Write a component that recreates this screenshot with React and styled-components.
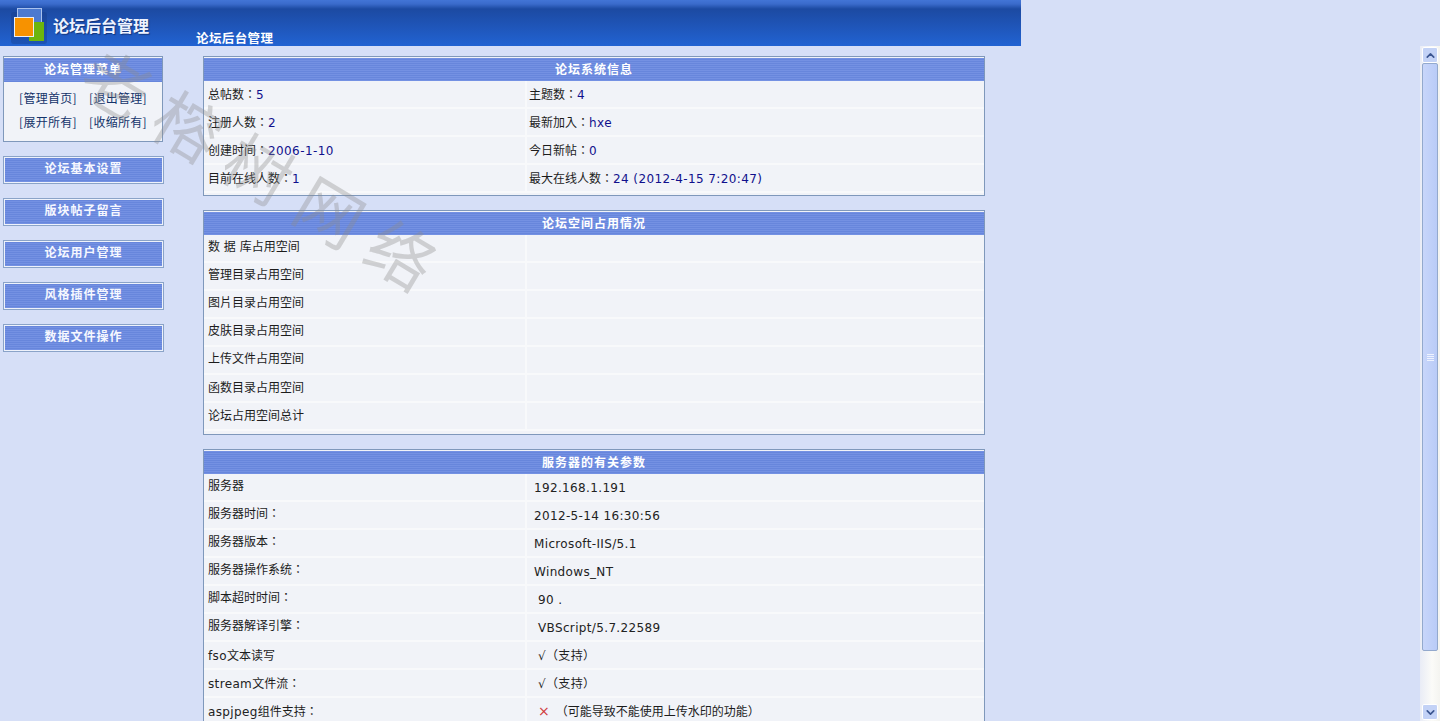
import React from 'react';
import styled, { createGlobalStyle } from 'styled-components';
import { ChevronUp, ChevronDown } from 'lucide-react';

const GlobalStyle = createGlobalStyle`
  html, body {
    margin: 0;
    padding: 0;
    height: 721px;
    overflow: hidden;
    background: #d6dff7;
  }
  * { box-sizing: border-box; }
`;

const Page = styled.div`
  position: relative;
  width: 1440px;
  height: 721px;
  overflow: hidden;
  font-family: "DejaVu Sans", "Noto Sans CJK TC", sans-serif;
  font-size: 12px;
  color: #1c1c1c;
`;

const Header = styled.header`
  width: 1021px;
  height: 46px;
  display: flex;
  align-items: flex-start;
  padding-left: 10px;
  background: linear-gradient(#4275d6 0, #3a6bcb 4px, #1c4aa2 9px, #1f55b8 26px, #2163d2 46px);
`;

const Logo = styled.svg`
  width: 38px;
  height: 38px;
  margin-top: 7px;
  flex: none;
`;

const LogoText = styled.div`
  margin: 14px 0 0 5px;
  width: 143px;
  font-family: "Noto Sans CJK SC", sans-serif;
  font-size: 16px;
  line-height: 22px;
  font-weight: 700;
  color: #eef3ff;
  text-shadow: 1px 1px 1px rgba(10, 30, 80, 0.6);
  white-space: nowrap;
`;

const HeaderTitle = styled.div`
  margin-top: 29px;
  font-family: "Noto Sans CJK SC", sans-serif;
  font-size: 12.5px;
  line-height: 17px;
  font-weight: 700;
  letter-spacing: 0.4px;
  color: #fff;
  white-space: nowrap;
`;

const Body = styled.div`
  display: flex;
  height: 675px;
`;

const Sidebar = styled.aside`
  width: 203px;
  flex: none;
  padding: 10px 0 0 3px;
  display: flex;
  flex-direction: column;
  align-items: flex-start;
`;

const stripes = `repeating-linear-gradient(#7491e3 0, #7491e3 1px, #6786dc 1px, #6786dc 2px)`;

const MenuBox = styled.div`
  width: 160px;
  height: 86px;
  margin-bottom: 14px;
  border: 1px solid #7f98bb;
  padding-top: 1px;
  background: #f1f3f8;
`;

const BoxTitle = styled.div`
  height: 24px;
  padding-bottom: 3px;
  display: flex;
  align-items: center;
  justify-content: center;
  background: ${stripes};
  font-family: "Noto Sans CJK SC", sans-serif;
  font-weight: 700;
  font-size: 12px;
  letter-spacing: 1px;
  color: #fff;
`;

const LinkGrid = styled.div`
  display: grid;
  grid-template-columns: 70px 70px;
  justify-content: center;
  padding-top: 7px;
  row-gap: 6px;
`;

const MenuLink = styled.span`
  font-family: "Noto Sans CJK SC", sans-serif;
  line-height: 18px;
  letter-spacing: 0.3px;
  color: #14336a;
  white-space: nowrap;
  text-align: center;
`;

const MenuButton = styled.div`
  width: 161px;
  height: 28px;
  margin-bottom: 14px;
  border: 1px solid #8aa3c8;
  outline: 1px solid #eef2fb;
  outline-offset: -2px;
  padding-bottom: 5px;
  display: flex;
  align-items: center;
  justify-content: center;
  background: ${stripes};
  font-family: "Noto Sans CJK SC", sans-serif;
  font-weight: 700;
  font-size: 12px;
  letter-spacing: 1px;
  color: #f6f8ff;
`;

const Main = styled.main`
  width: 782px;
  flex: none;
  padding-top: 10px;
  display: flex;
  flex-direction: column;
  gap: 14px;
`;

const Panel = styled.section`
  flex: none;
  border: 1px solid #7f98bb;
  padding: 1px 0 ${(p) => p.$bottom}px;
  background: #f1f3f8;
`;

const PanelTitle = styled(BoxTitle)`
  height: 23px;
`;

const Row = styled.div`
  height: 28px;
  display: grid;
  grid-template-columns: 321px 1fr;
  border-bottom: 2px solid #f8f9fb;
`;

const Cell = styled.div`
  padding: ${(p) => p.$top}px 0 0 ${(p) => p.$left}px;
  line-height: 18px;
  white-space: nowrap;
  border-left: ${(p) => (p.$divided ? '2px solid #f8f9fb' : 'none')};
`;

const Value = styled.span`
  color: #10108c;
  letter-spacing: 0.4px;
`;

const Plain = styled.span`
  color: #222;
  letter-spacing: 0.35px;
`;

const Cross = styled.span`
  color: #d03a3a;
  font-size: 14px;
  line-height: 14px;
  margin-right: 6px;
`;

const Watermark = styled.div`
  position: absolute;
  left: 108px;
  top: 34px;
  transform-origin: 0 0;
  transform: rotate(31deg);
  font-family: "Noto Sans CJK SC", sans-serif;
  font-size: 66px;
  line-height: 70px;
  font-weight: 400;
  letter-spacing: 17px;
  color: rgba(140, 140, 140, 0.36);
  white-space: nowrap;
  pointer-events: none;
`;

const Scrollbar = styled.div`
  position: absolute;
  right: 0;
  top: 46px;
  bottom: 0;
  width: 20px;
  padding: 1px 2px 1px 2px;
  display: flex;
  flex-direction: column;
  background: linear-gradient(90deg, #e9ecf6, #fbfbf8 60%, #f4f4f0);
`;

const ScrollButton = styled.div`
  height: 16px;
  flex: none;
  display: flex;
  align-items: center;
  justify-content: center;
  border: 1px solid #fff;
  border-radius: 2px;
  background: #c3d2f6;
  color: #3b5590;
`;

const Thumb = styled.div`
  flex: none;
  height: 588px;
  display: flex;
  flex-direction: column;
  align-items: center;
  justify-content: center;
  gap: 1px;
  border: 1px solid #93a9cd;
  border-radius: 2px;
  background: linear-gradient(90deg, #c8d6fa, #b9cbf7);
`;

const Grip = styled.span`
  width: 7px;
  height: 1px;
  background: #eef3ff;
`;

const Track = styled.div`
  flex: 1;
`;

const systemRows = [
  ['总帖数：', '5', '主题数：', '4'],
  ['注册人数：', '2', '最新加入：', 'hxe'],
  ['创建时间：', '2006-1-10', '今日新帖：', '0'],
  ['目前在线人数：', '1', '最大在线人数：', '24 (2012-4-15 7:20:47)'],
];

const spaceRows = [
  ['数 据 库占用空间', 3],
  ['管理目录占用空间', 3],
  ['图片目录占用空间', 3],
  ['皮肤目录占用空间', 3],
  ['上传文件占用空间', 3],
  ['函数目录占用空间', 4],
  ['论坛占用空间总计', 4],
];

const serverRows = [
  ['', '服务器', '192.168.1.191', 7, 5, 3],
  ['', '服务器时间：', '2012-5-14 16:30:56', 7, 5, 3],
  ['', '服务器版本：', 'Microsoft-IIS/5.1', 7, 5, 3],
  ['', '服务器操作系统：', 'Windows_NT', 7, 5, 3],
  ['', '脚本超时时间：', '90 .', 11, 5, 3],
  ['', '服务器解译引擎：', 'VBScript/5.7.22589', 11, 5, 3],
  ['fso', '文本读写', '√（支持）', 11, 5, 5],
  ['stream', '文件流：', '√（支持）', 11, 5, 5],
];

const menuButtons = ['论坛基本设置', '版块帖子留言', '论坛用户管理', '风格插件管理', '数据文件操作'];

export default function App() {
  return (
    <Page>
      <GlobalStyle />
      <Header>
        <Logo viewBox="0 0 38 38">
          <rect x="1" y="5" width="36" height="32" rx="3" fill="#163a80" opacity="0.35" />
          <rect x="7.5" y="1.5" width="24" height="24" fill="#4c7ad0" stroke="#a9c2ee" strokeWidth="1" />
          <rect x="19" y="15" width="15" height="19" fill="#6db50c" />
          <rect x="4.5" y="10.5" width="19" height="19" fill="#f79200" stroke="#e8eef8" strokeWidth="1" />
        </Logo>
        <LogoText>论坛后台管理</LogoText>
        <HeaderTitle>论坛后台管理</HeaderTitle>
      </Header>
      <Body>
        <Sidebar>
          <MenuBox>
            <BoxTitle>论坛管理菜单</BoxTitle>
            <LinkGrid>
              <MenuLink>[管理首页]</MenuLink>
              <MenuLink>[退出管理]</MenuLink>
              <MenuLink>[展开所有]</MenuLink>
              <MenuLink>[收缩所有]</MenuLink>
            </LinkGrid>
          </MenuBox>
          {menuButtons.map((label) => (
            <MenuButton key={label}>{label}</MenuButton>
          ))}
        </Sidebar>
        <Main>
          <Panel $bottom={2}>
            <PanelTitle>论坛系统信息</PanelTitle>
            {systemRows.map(([a, b, c, d]) => (
              <Row key={a}>
                <Cell $top={5} $left={4}>{a}<Value>{b}</Value></Cell>
                <Cell $top={5} $left={2} $divided>{c}<Value>{d}</Value></Cell>
              </Row>
            ))}
          </Panel>
          <Panel $bottom={3}>
            <PanelTitle>论坛空间占用情况</PanelTitle>
            {spaceRows.map(([label, top]) => (
              <Row key={label}>
                <Cell $top={top} $left={4}>{label}</Cell>
                <Cell $top={top} $left={2} $divided />
              </Row>
            ))}
          </Panel>
          <Panel $bottom={0}>
            <PanelTitle>服务器的有关参数</PanelTitle>
            {serverRows.map(([latin, label, value, left, top, labelTop]) => (
              <Row key={label}>
                <Cell $top={labelTop} $left={4}><Plain>{latin}</Plain>{label}</Cell>
                <Cell $top={top} $left={left} $divided><Plain>{value}</Plain></Cell>
              </Row>
            ))}
            <Row>
              <Cell $top={5} $left={4}><Plain>aspjpeg</Plain>组件支持：</Cell>
              <Cell $top={5} $left={11} $divided><Cross>×</Cross>（可能导致不能使用上传水印的功能）</Cell>
            </Row>
          </Panel>
        </Main>
      </Body>
      <Watermark>老榕树网络</Watermark>
      <Scrollbar>
        <ScrollButton><ChevronUp size={13} strokeWidth={3} /></ScrollButton>
        <Thumb><Grip /><Grip /><Grip /><Grip /></Thumb>
        <Track />
        <ScrollButton><ChevronDown size={13} strokeWidth={3} /></ScrollButton>
      </Scrollbar>
    </Page>
  );
}
